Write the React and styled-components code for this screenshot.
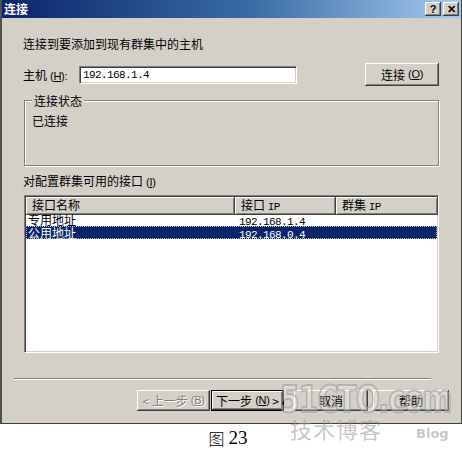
import React from "react";
import styled, { createGlobalStyle, css } from "styled-components";

const Global = createGlobalStyle`
  html, body { margin: 0; padding: 0; background: #fff; }
  body { font-family: "Noto Sans CJK SC", "Liberation Sans", sans-serif; font-size: 12px; }
  #root { width: 462px; position: relative; }
`;

const raised = css`
  background: #d4d0c8;
  box-shadow: inset -1px -1px 0 #404040, inset 1px 1px 0 #ffffff,
    inset -2px -2px 0 #808080, inset 2px 2px 0 #d4d0c8;
`;

const Page = styled.div`
  position: relative;
  width: 462px;
`;

const Window = styled.div`
  box-sizing: border-box;
  width: 462px;
  height: 424px;
  background: #d4d0c8;
  border-left: 2px solid #505050;
  border-right: 1px solid #404040;
  border-bottom: 1px solid #404040;
  display: flex;
  flex-direction: column;
`;

const TitleBar = styled.div`
  height: 18px;
  background: linear-gradient(to right, #0a246a 0%, #3a6ea5 55%, #a6caf0 100%);
  display: flex;
  align-items: center;
  justify-content: space-between;
  padding: 0 2px 0 2px;
`;

const Title = styled.span`
  color: #fff;
  font-weight: bold;
  font-size: 12px;
  line-height: 14px;
`;

const CaptionButtons = styled.div`
  display: flex;
  gap: 2px;
`;

const CaptionButton = styled.div`
  ${raised};
  width: 16px;
  height: 14px;
  display: flex;
  align-items: center;
  justify-content: center;
  font-family: "Liberation Sans", sans-serif;
  font-weight: bold;
  font-size: 11px;
  color: #000;
`;

const Content = styled.div`
  padding: 19px 22px 0 21px;
  display: flex;
  flex-direction: column;
`;

const Text = styled.div`
  line-height: 13px;
  height: 13px;
  white-space: nowrap;
  color: #000;
`;

const Mnemo = styled.span`
  font-family: "Liberation Sans", sans-serif;
  font-size: 11px;
  margin-left: 3px;
  letter-spacing: -0.3px;
`;

const Mono = styled.span`
  font-family: "Liberation Mono", monospace;
  font-size: 11px;
  letter-spacing: -0.6px;
`;

const HostRow = styled.div`
  margin-top: 13px;
  display: flex;
  align-items: center;
  height: 23px;
`;

const Label = styled(Text)`
  width: 56px;
`;

const Input = styled.div`
  box-sizing: border-box;
  width: 218px;
  height: 18px;
  background: #fff;
  border: 1px solid;
  border-color: #808080 #ffffff #ffffff #808080;
  box-shadow: inset 1px 1px 0 #404040, inset -1px -1px 0 #d4d0c8;
  padding: 1px 3px;
  line-height: 14px;
  display: flex;
  align-items: center;
`;

const Button = styled.div`
  ${raised};
  box-sizing: border-box;
  width: ${(p) => p.$w || 73}px;
  height: ${(p) => p.$h || 21}px;
  display: flex;
  align-items: center;
  justify-content: center;
  line-height: 13px;
  white-space: nowrap;
  margin-left: ${(p) => p.$ml || 0}px;
  color: ${(p) => (p.$disabled ? "#808080" : "#000")};
  text-shadow: ${(p) => (p.$disabled ? "1px 1px 0 #fff" : "none")};
  ${(p) =>
    p.$default &&
    css`
      outline: 1px solid #000;
      outline-offset: -1px;
      box-shadow: inset -2px -2px 0 #404040, inset 2px 2px 0 #ffffff,
        inset -3px -3px 0 #808080;
    `}
`;

const Spacer = styled.div`
  flex: 1;
`;

const Group = styled.fieldset`
  margin: 8px 0 0 1px;
  padding: 7px 0 0 7px;
  height: 72px;
  box-sizing: border-box;
  border: 1px solid #808080;
  box-shadow: 1px 1px 0 #fff, inset 1px 1px 0 #fff;
`;

const Legend = styled.legend`
  padding: 0 2px;
  line-height: 13px;
  background: #d4d0c8;
`;

const SectionLabel = styled(Text)`
  margin-top: 8px;
`;

const List = styled.div`
  margin: 8px 0 0 1px;
  box-sizing: border-box;
  height: 158px;
  background: #fff;
  border: 1px solid;
  border-color: #808080 #ffffff #ffffff #808080;
  box-shadow: inset 1px 1px 0 #404040, inset -1px -1px 0 #d4d0c8;
  padding: 1px;
  display: flex;
  flex-direction: column;
`;

const Cols = "209px 101px 102px";

const Header = styled.div`
  display: grid;
  grid-template-columns: ${Cols};
  height: 15px;
`;

const HeaderCell = styled.div`
  ${raised};
  padding: 0 6px;
  line-height: 15px;
  white-space: nowrap;
`;

const Row = styled.div`
  display: grid;
  grid-template-columns: ${Cols};
  height: 13px;
  line-height: 13px;
  background: ${(p) => (p.$sel ? "#0a246a" : "transparent")};
  color: ${(p) => (p.$sel ? "#fff" : "#000")};
  outline: ${(p) => (p.$sel ? "1px dotted #c0c0c0" : "none")};
  outline-offset: -1px;
  margin-top: ${(p) => (p.$first ? 1 : 0)}px;
`;

const Cell = styled.div`
  padding: 0 2px;
  white-space: nowrap;
`;

const IpCell = styled(Cell)`
  padding-left: 4px;
`;

const Separator = styled.div`
  margin: 25px 8px 0 -9px;
  height: 1px;
  background: #808080;
  border-bottom: 1px solid #fff;
`;

const ButtonRow = styled.div`
  margin-top: 10px;
  display: flex;
  justify-content: flex-end;
  margin-right: -10px;
`;

const Caption = styled.div`
  height: 27px;
  display: flex;
  align-items: center;
  justify-content: center;
  gap: 4px;
  color: #000;
  padding-right: 6px;
`;

const CaptionNum = styled.span`
  font-family: "Liberation Serif", serif;
  font-size: 19px;
`;

const CaptionChar = styled.span`
  font-family: "Noto Sans CJK SC", sans-serif;
  font-size: 16px;
  font-weight: 300;
`;

const Watermark = styled.div`
  position: absolute;
  left: 280px;
  top: 378px;
  width: 182px;
  pointer-events: none;
  color: rgba(150, 150, 150, 0.55);
`;

const WmBig = styled.div`
  font-family: "DejaVu Sans", sans-serif;
  font-weight: bold;
  font-size: 38px;
  line-height: 42px;
  letter-spacing: -1px;
  color: rgba(255, 255, 255, 0.25);
  -webkit-text-stroke: 2px rgba(150, 150, 150, 0.55);
  transform: scaleX(0.74);
  transform-origin: left center;
  white-space: nowrap;
`;

const WmSmall = styled.div`
  display: flex;
  align-items: baseline;
  gap: 34px;
  margin-top: -4px;
  padding-left: 10px;
  white-space: nowrap;
`;

const WmCjk = styled.span`
  font-size: 22px;
  line-height: 24px;
  letter-spacing: 1px;
`;

const WmBlog = styled.span`
  font-family: "DejaVu Sans", sans-serif;
  font-weight: bold;
  font-size: 13px;
`;

export default function App() {
  return (
    <Page>
      <Global />
      <Window>
        <TitleBar>
          <Title>连接</Title>
          <CaptionButtons>
            <CaptionButton>?</CaptionButton>
            <CaptionButton>✕</CaptionButton>
          </CaptionButtons>
        </TitleBar>
        <Content>
          <Text>连接到要添加到现有群集中的主机</Text>
          <HostRow>
            <Label>
              主机<Mnemo>(<u>H</u>):</Mnemo>
            </Label>
            <Input>
              <Mono>192.168.1.4</Mono>
            </Input>
            <Spacer />
            <Button $w={74} $h={23}>
              连接<Mnemo>(<u>O</u>)</Mnemo>
            </Button>
          </HostRow>
          <Group>
            <Legend>连接状态</Legend>
            <Text>已连接</Text>
          </Group>
          <SectionLabel>
            对配置群集可用的接口<Mnemo>(<u>I</u>)</Mnemo>
          </SectionLabel>
          <List>
            <Header>
              <HeaderCell>接口名称</HeaderCell>
              <HeaderCell>
                接口 <Mono>IP</Mono>
              </HeaderCell>
              <HeaderCell>
                群集 <Mono>IP</Mono>
              </HeaderCell>
            </Header>
            <Row $first>
              <Cell>专用地址</Cell>
              <IpCell>
                <Mono>192.168.1.4</Mono>
              </IpCell>
              <Cell />
            </Row>
            <Row $sel>
              <Cell>公用地址</Cell>
              <IpCell>
                <Mono>192.168.0.4</Mono>
              </IpCell>
              <Cell />
            </Row>
          </List>
          <Separator />
          <ButtonRow>
            <Button $disabled>
              &lt; 上一步<Mnemo>(<u>B</u>)</Mnemo>
            </Button>
            <Button $default $ml={1}>
              下一步<Mnemo>(<u>N</u>)</Mnemo>&nbsp;&gt;
            </Button>
            <Button $ml={10} $w={74}>取消</Button>
            <Button $ml={5} $w={76}>帮助</Button>
          </ButtonRow>
        </Content>
      </Window>
      <Caption>
        <CaptionChar>图</CaptionChar>
        <CaptionNum>23</CaptionNum>
      </Caption>
      <Watermark>
        <WmBig>51CTO.com</WmBig>
        <WmSmall>
          <WmCjk>技术博客</WmCjk>
          <WmBlog>Blog</WmBlog>
        </WmSmall>
      </Watermark>
    </Page>
  );
}
